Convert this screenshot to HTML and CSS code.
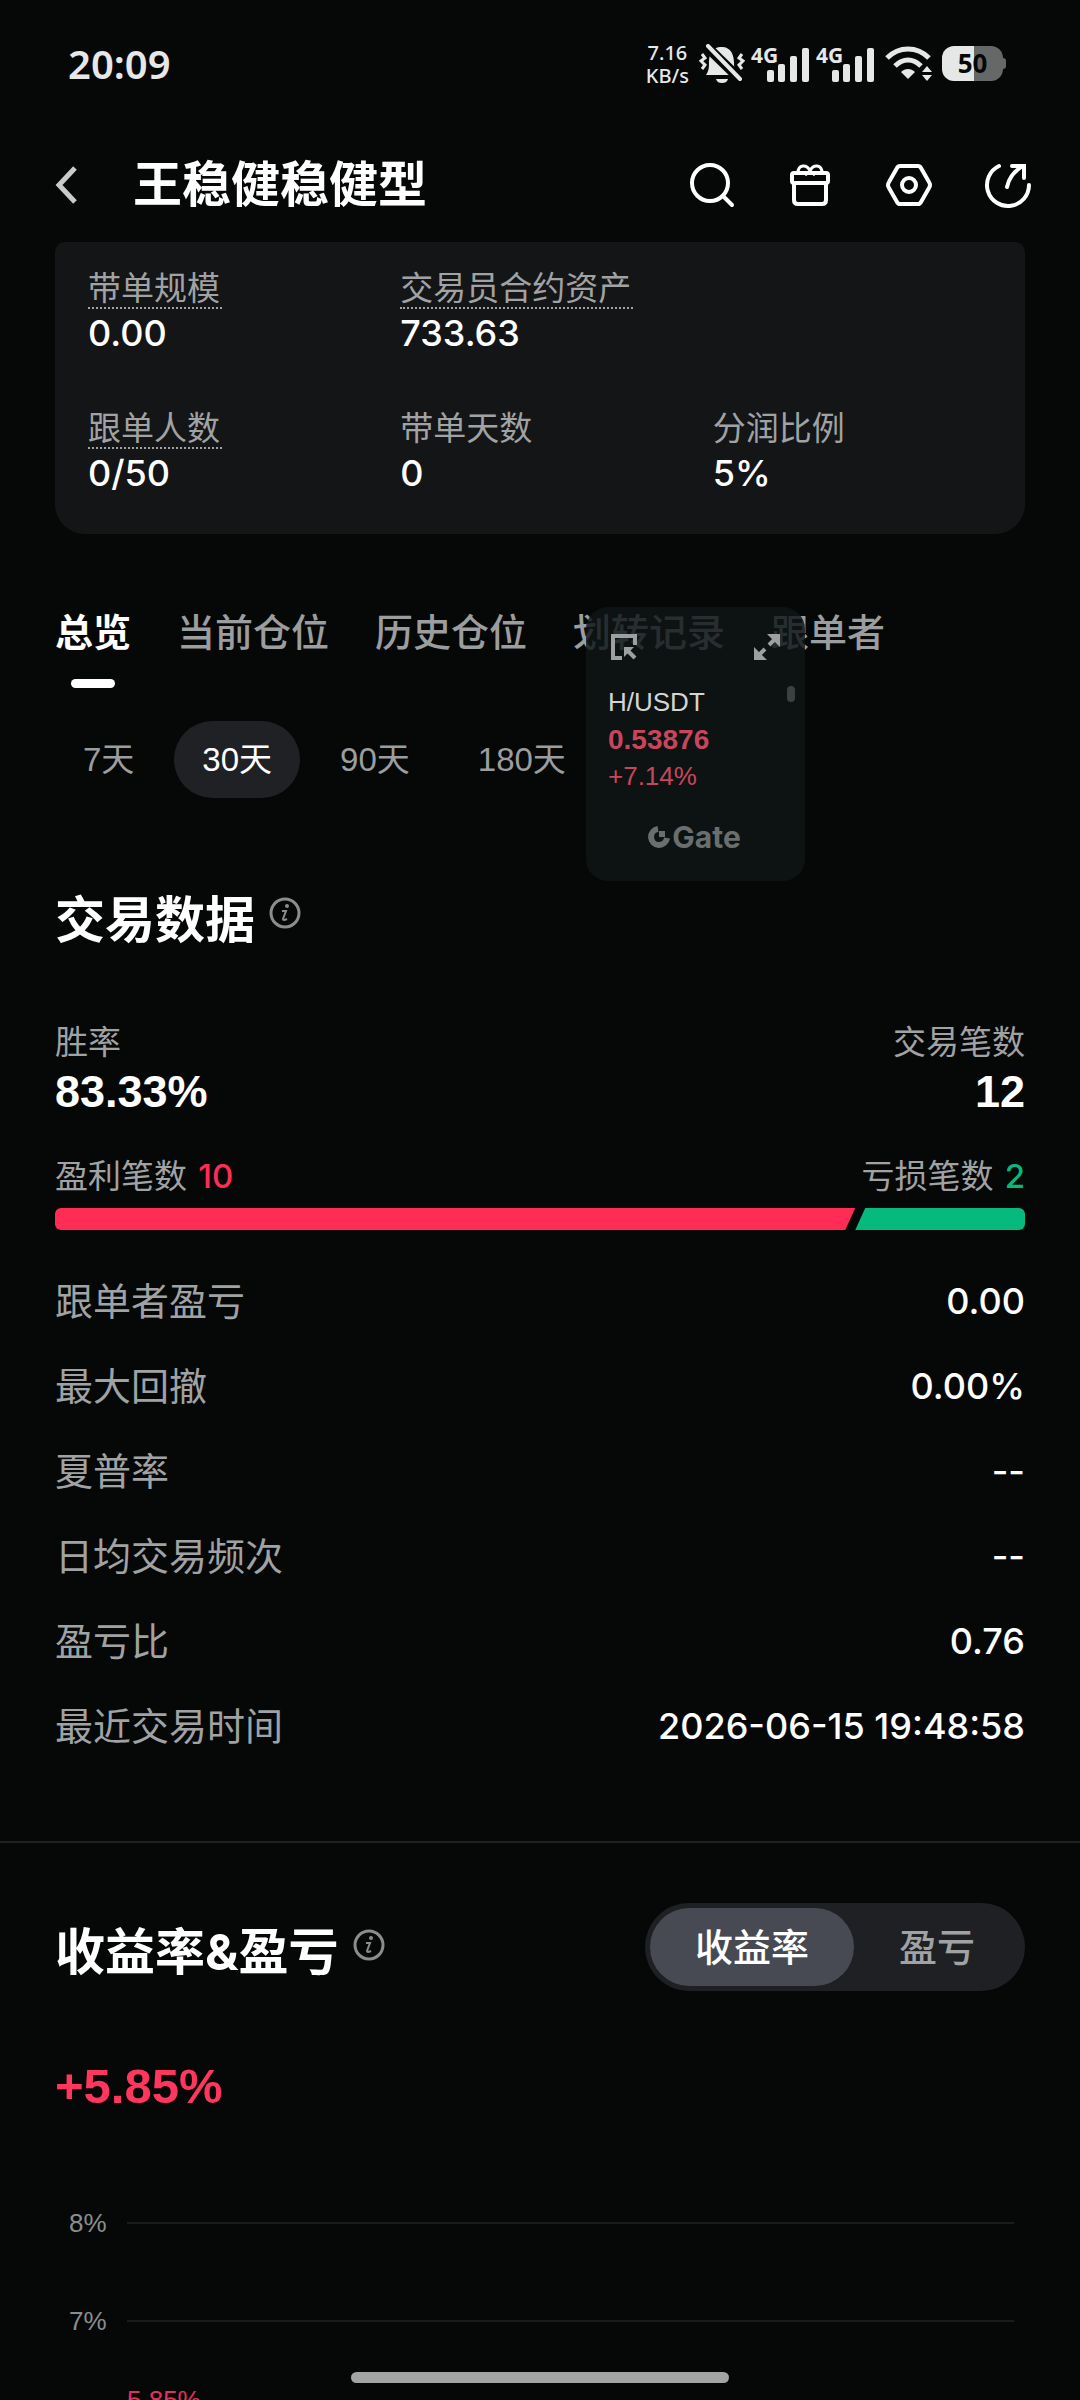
FILE: index.html
```html
<!DOCTYPE html>
<html lang="zh-CN">
<head>
    <meta charset="UTF-8">
    <meta name="viewport" content="width=device-width, initial-scale=1.0">
    <title>王稳健稳健型</title>
    <link rel="stylesheet" href="styles.css">
</head>
<body>

<div class="screen">
    <div class="status-bar">
        <span class="clock">20:09</span>
        <div class="status-icons">
            <div class="net-speed"><span>7.16</span><span>KB/s</span></div>
            <svg class="bell" width="46" height="40" viewBox="0 0 46 40" fill="#e6e7e7">
                <path d="M10 20c0-9 2-17 13-17 9 0 12 8 12 16 0 6 1 8 4 12H7c2-3 3-6 3-11z"/>
                <path d="M17 35h12c-1 3-3 4-6 4s-5-1-6-4z"/>
                <path d="M5 0l39 38" stroke="#060808" stroke-width="10"/>
                <path d="M9 2l32 33" stroke="#e6e7e7" stroke-width="4" stroke-linecap="round"/>
                <path d="M3 10l3 4-4 3 4 4-3 4M43 10l-3 4 4 3-4 4 3 4" fill="none" stroke="#e6e7e7" stroke-width="3"/>
            </svg>
            <div class="signal">
                <span>4G</span>
                <svg width="44" height="34" viewBox="0 0 44 34" fill="#e6e7e7">
                    <rect x="1" y="22" width="7" height="12" rx="2"/><rect x="12" y="16" width="7" height="18" rx="2"/>
                    <rect x="24" y="8" width="7" height="26" rx="2"/><rect x="36" y="0" width="7" height="34" rx="2"/>
                </svg>
            </div>
            <div class="signal">
                <span>4G</span>
                <svg width="44" height="34" viewBox="0 0 44 34" fill="#e6e7e7">
                    <rect x="1" y="22" width="7" height="12" rx="2"/><rect x="12" y="16" width="7" height="18" rx="2"/>
                    <rect x="24" y="8" width="7" height="26" rx="2"/><rect x="36" y="0" width="7" height="34" rx="2"/>
                </svg>
            </div>
            <svg class="wifi" width="48" height="36" viewBox="0 0 48 36" fill="none" stroke="#e6e7e7" stroke-width="5">
                <path d="M2 12c12-12 30-12 42 0"/>
                <path d="M10 20c8-8 18-8 26 0"/>
                <path d="M23 33l-7-7c4-4 10-4 14 0z" fill="#e6e7e7" stroke="none"/>
                <path d="M42 20l5 6H37zM42 35l5-6H37z" fill="#e6e7e7" stroke="none"/>
            </svg>
            <div class="battery"><span>50</span></div>
        </div>
    </div>

    <header class="header">
        <button class="icon-btn back" aria-label="返回">
            <svg width="22" height="38" viewBox="0 0 22 38" fill="none" stroke="#c9cbca" stroke-width="5">
                <path d="M20 2L4 19l16 17"/>
            </svg>
        </button>
        <h1>王稳健稳健型</h1>
        <nav class="actions">
            <button class="icon-btn" aria-label="搜索">
                <svg width="48" height="48" viewBox="0 0 48 48" fill="none" stroke="#fff" stroke-width="4" stroke-linecap="round">
                    <circle cx="23" cy="22" r="18"/><path d="M36 35l9 9"/>
                </svg>
            </button>
            <button class="icon-btn" aria-label="礼物">
                <svg width="48" height="48" viewBox="0 0 48 48" fill="none" stroke="#fff" stroke-width="4" stroke-linejoin="round">
                    <rect x="6" y="12" width="36" height="10" rx="2"/>
                    <path d="M8 22v17q0 4 4 4h24q4 0 4-4V22"/>
                    <path d="M12 12c0-9 9-9 12-2 3-7 12-7 12 2M19 14l5-4 5 4" stroke-width="3"/>
                </svg>
            </button>
            <button class="icon-btn" aria-label="设置">
                <svg width="48" height="48" viewBox="0 0 48 48" fill="none" stroke="#fff" stroke-width="4" stroke-linejoin="round">
                    <path d="M15 5h18q2 0 3 2l8 14q2 3 0 6l-8 14q-1 2-3 2H15q-2 0-3-2L4 27q-2-3 0-6l8-14q1-2 3-2z"/>
                    <circle cx="24" cy="24" r="7"/>
                </svg>
            </button>
            <button class="icon-btn" aria-label="分享">
                <svg width="48" height="48" viewBox="0 0 48 48" fill="none" stroke="#fff" stroke-width="4" stroke-linecap="round">
                    <path d="M15 5a21 21 0 1 0 30 19"/>
                    <path d="M23 26c2-9 6-14 14-20M28 5h12v12"/>
                </svg>
            </button>
        </nav>
    </header>

    <main>
        <dl class="summary">
            <div class="item">
                <dt class="hint">带单规模</dt>
                <dd>0.00</dd>
            </div>
            <div class="item wide">
                <dt class="hint">交易员合约资产</dt>
                <dd>733.63</dd>
            </div>
            <div class="item">
                <dt class="hint">跟单人数</dt>
                <dd>0/50</dd>
            </div>
            <div class="item">
                <dt>带单天数</dt>
                <dd>0</dd>
            </div>
            <div class="item">
                <dt>分润比例</dt>
                <dd>5%</dd>
            </div>
        </dl>

        <div class="tabs" role="tablist">
            <button class="tab active" role="tab" aria-selected="true">总览</button>
            <button class="tab" role="tab">当前仓位</button>
            <button class="tab" role="tab">历史仓位</button>
            <button class="tab" role="tab">划转记录</button>
            <button class="tab" role="tab">跟单者</button>
        </div>

        <div class="periods">
            <button class="period">7天</button>
            <button class="period active">30天</button>
            <button class="period">90天</button>
            <button class="period">180天</button>
        </div>

        <section class="trade-data">
            <div class="title">
                <h2>交易数据</h2>
                <svg class="info" width="32" height="32" viewBox="0 0 32 32" fill="none" stroke="#8b8d8d" stroke-width="3">
                    <circle cx="16" cy="16" r="14"/>
                    <path d="M13 14h4l-3 8q0 2 4 0" stroke-width="2"/><circle cx="18" cy="9" r="2" fill="#8b8d8d" stroke="none"/>
                </svg>
            </div>

            <div class="rate-row">
                <div class="rate">
                    <span class="label">胜率</span>
                    <strong>83.33%</strong>
                </div>
                <div class="rate right">
                    <span class="label">交易笔数</span>
                    <strong>12</strong>
                </div>
            </div>

            <div class="count-row">
                <span class="label">盈利笔数 <b class="red">10</b></span>
                <span class="label">亏损笔数 <b class="green">2</b></span>
            </div>
            <div class="ratio-bar">
                <div class="win" style="flex-grow: 82.5"></div>
                <div class="loss" style="flex-grow: 17.5"></div>
            </div>

            <dl class="details">
                <div class="row"><dt>跟单者盈亏</dt><dd>0.00</dd></div>
                <div class="row"><dt>最大回撤</dt><dd>0.00%</dd></div>
                <div class="row"><dt>夏普率</dt><dd>--</dd></div>
                <div class="row"><dt>日均交易频次</dt><dd>--</dd></div>
                <div class="row"><dt>盈亏比</dt><dd>0.76</dd></div>
                <div class="row"><dt>最近交易时间</dt><dd>2026-06-15 19:48:58</dd></div>
            </dl>
        </section>

        <section class="profit">
            <div class="profit-head">
                <div class="title">
                    <h2>收益率&amp;盈亏</h2>
                    <svg class="info" width="32" height="32" viewBox="0 0 32 32" fill="none" stroke="#8b8d8d" stroke-width="3">
                        <circle cx="16" cy="16" r="14"/>
                        <path d="M13 14h4l-3 8q0 2 4 0" stroke-width="2"/><circle cx="18" cy="9" r="2" fill="#8b8d8d" stroke="none"/>
                    </svg>
                </div>
                <div class="switch">
                    <button class="active">收益率</button>
                    <button>盈亏</button>
                </div>
            </div>
            <p class="profit-value">+5.85%</p>
            <div class="chart">
                <div class="grid-line"><span>8%</span></div>
                <div class="grid-line"><span>7%</span></div>
                <div class="point-label">5.85%</div>
            </div>
        </section>
    </main>

    <!-- floating price widget -->
    <aside class="ticker">
        <div class="ticker-tools">
            <svg width="26" height="26" viewBox="0 0 26 26" fill="none" stroke="#9da0a0" stroke-width="4">
                <path d="M11 24H2V2h22v9"/><path d="M24 24l-8-8" /><path d="M13 13h10l-10 10z" fill="#9da0a0" stroke="none"/>
            </svg>
            <svg width="26" height="26" viewBox="0 0 26 26" fill="#9da0a0">
                <path d="M13 0h13v13zM0 13v13h13z"/>
                <path d="M22 4l-7 7M11 15l-7 7" stroke="#9da0a0" stroke-width="4"/>
            </svg>
        </div>
        <div class="pair">H/USDT</div>
        <div class="price">0.53876</div>
        <div class="change">+7.14%</div>
        <div class="brand">
            <svg width="24" height="24" viewBox="0 0 24 24" fill="none">
                <path d="M11 4a8 8 0 1 0 9 9" stroke="#6a6e6e" stroke-width="6"/>
                <rect x="12" y="6" width="6" height="6" fill="#6a6e6e"/>
            </svg>
            <span>Gate</span>
        </div>
        <i class="thumb"></i>
    </aside>

    <div class="home-bar"></div>
</div>

</body>
</html>
```

FILE: styles.css
```css
* {
    box-sizing: border-box;
}

body {
    margin: 0;
    background-color: #060808;
    color: #ffffff;
    font-family: Inter, 'Noto Sans CJK SC', sans-serif;
}

h1, h2, p, dl, dd {
    margin: 0;
}

button {
    padding: 0;
    border: none;
    background: none;
    color: inherit;
    font-family: inherit;
    cursor: pointer;
}

svg {
    display: block;
}

.screen {
    position: relative;
    height: 100vh;
    overflow: hidden;
}

/* status bar */
.status-bar {
    display: flex;
    align-items: center;
    justify-content: space-between;
    height: 127px;
    padding: 0 74px 0 68px;
    color: #e6e7e7;
    font-family: 'Noto Sans', sans-serif;
}

.clock {
    font-size: 40px;
    font-weight: 600;
}

.status-icons {
    display: flex;
    align-items: center;
}

.net-speed {
    display: flex;
    flex-direction: column;
    align-items: center;
    margin-right: 10px;
    font-size: 20px;
    font-weight: 500;
    line-height: 23px;
}

.bell {
    margin-right: 6px;
}

.signal {
    display: flex;
    align-items: flex-start;
    width: 65px;
}

.signal span {
    font-size: 21px;
    font-weight: 700;
    line-height: 20px;
}

.signal svg {
    margin: 3px 0 0 -12px;
}

.wifi {
    margin-left: 4px;
}

.battery {
    position: relative;
    width: 61px;
    height: 35px;
    margin: 0 3px 0 9px;
    border-radius: 12px;
    background: linear-gradient(90deg, #e6e7e7 53%, #666868 53%);
    color: #060808;
    font-size: 26px;
    font-weight: 700;
    line-height: 35px;
    text-align: center;
}

.battery::after {
    content: "";
    position: absolute;
    top: 12px;
    right: -3px;
    width: 4px;
    height: 11px;
    border-radius: 0 3px 3px 0;
    background-color: #666868;
}

/* header */
.header {
    display: flex;
    align-items: center;
    height: 115px;
    padding: 0 48px 0 55px;
}

.header h1 {
    flex: 1;
    margin-left: 56px;
    font-size: 49px;
    font-weight: 700;
    line-height: 60px;
}

.actions {
    display: flex;
    gap: 51px;
}

main {
    padding: 0 55px;
}

/* summary card */
.summary {
    display: grid;
    grid-template-columns: repeat(3, 1fr);
    row-gap: 51px;
    padding: 27px 0 36px 33px;
    background-color: #141517;
    border-radius: 10px 10px 30px 30px;
}

.summary .wide {
    grid-column: span 2;
}

.summary dt {
    width: fit-content;
    padding-right: 2px;
    border-bottom: 2px dotted transparent;
    color: #a0a2a3;
    font-size: 33px;
    line-height: 38px;
}

.summary dt.hint {
    border-bottom-color: #a0a2a3;
}

.summary dd {
    font-size: 36px;
    font-weight: 500;
    line-height: 49px;
}

/* tabs */
.tabs {
    display: flex;
    align-items: flex-start;
    gap: 46px;
    margin-top: 71px;
}

.tab {
    color: #9b9d9e;
    font-size: 38px;
    font-weight: 500;
    line-height: 54px;
    white-space: nowrap;
}

.tab.active {
    color: #ffffff;
    font-weight: 700;
}

.tab.active::after {
    content: "";
    display: block;
    width: 44px;
    height: 9px;
    margin: 20px auto 0;
    border-radius: 5px;
    background-color: #ffffff;
}

.periods {
    display: flex;
    gap: 12px;
    margin-top: 33px;
}

.period {
    padding: 0 28px;
    border-radius: 39px;
    color: #9b9d9e;
    font-family: 'Liberation Sans', 'Noto Sans CJK SC', sans-serif;
    font-size: 33px;
    line-height: 77px;
}

.period.active {
    background-color: #202124;
    color: #ffffff;
}

/* trade data */
.title {
    display: flex;
    align-items: center;
}

.title h2 {
    padding-top: 6px;
    font-size: 50px;
    font-weight: 700;
    line-height: 60px;
}

.info {
    margin: 0 0 8px 14px;
}

.trade-data {
    margin-top: 86px;
}

.label {
    color: #a0a2a3;
    font-size: 33px;
    line-height: 40px;
}

.rate-row {
    display: flex;
    justify-content: space-between;
    margin-top: 72px;
}

.rate {
    display: flex;
    flex-direction: column;
}

.rate.right {
    align-items: flex-end;
}

.rate strong {
    font-family: 'Liberation Sans', sans-serif;
    font-size: 45px;
    font-weight: 700;
    line-height: 60px;
}

.count-row {
    display: flex;
    justify-content: space-between;
    margin-top: 34px;
}

.count-row b {
    margin-left: 2px;
    font-weight: 500;
}

.red {
    color: #ff2d55;
}

.green {
    color: #06b97c;
}

.ratio-bar {
    display: flex;
    height: 22px;
    margin-top: 12px;
    border-radius: 6px;
    overflow: hidden;
}

.win {
    background-color: #ff2d55;
    clip-path: polygon(0 0, 100% 0, calc(100% - 10px) 100%, 0 100%);
}

.loss {
    background-color: #06b97c;
    clip-path: polygon(10px 0, 100% 0, 100% 100%, 0 100%);
}

.details {
    margin-top: 29px;
}

.row {
    display: flex;
    align-items: center;
    justify-content: space-between;
    line-height: 85px;
}

.row dt {
    color: #a0a2a3;
    font-size: 38px;
}

.row dd {
    font-size: 36px;
    font-weight: 500;
}

/* profit */
.profit {
    margin: 72px -55px 0;
    padding: 60px 55px 0;
    border-top: 2px solid #1f2121;
}

.profit-head {
    display: flex;
    align-items: center;
    justify-content: space-between;
}

.profit-head .title {
    padding-top: 4px;
}

.switch {
    display: flex;
    padding: 5px;
    border-radius: 44px;
    background-color: #1f2023;
}

.switch button {
    padding: 0 45px;
    border-radius: 39px;
    color: #a0a2a3;
    font-size: 38px;
    font-weight: 500;
    line-height: 78px;
}

.switch button.active {
    background-color: #474a53;
    color: #ffffff;
}

.profit-value {
    margin-top: 65px;
    color: #ff365d;
    font-family: 'Liberation Sans', sans-serif;
    font-size: 49px;
    font-weight: 700;
    line-height: 60px;
}

.chart {
    margin-top: 87px;
    padding: 0 11px 0 14px;
    font-family: 'Liberation Sans', sans-serif;
    font-size: 26px;
    line-height: 40px;
}

.grid-line {
    display: flex;
    align-items: center;
    margin-bottom: 58px;
    color: #8b8d8d;
}

.grid-line span {
    width: 58px;
}

.grid-line::after {
    content: "";
    flex: 1;
    height: 2px;
    background-color: #1a1c1c;
}

.point-label {
    margin: -19px 0 0 58px;
    color: #e0335a;
}

/* floating ticker */
.ticker {
    position: absolute;
    top: 607px;
    right: 275px;
    width: 219px;
    padding: 27px 25px 21px 22px;
    border-radius: 22px;
    background-color: rgba(15, 21, 22, 0.82);
    font-family: 'Liberation Sans', sans-serif;
    font-size: 26px;
    line-height: 37px;
}

.ticker-tools {
    display: flex;
    justify-content: space-between;
    padding-left: 3px;
    margin-bottom: 24px;
}

.pair {
    color: #d3d5d5;
}

.price {
    color: #c8465c;
    font-size: 28px;
    font-weight: 700;
}

.change {
    color: #c8465c;
}

.brand {
    display: flex;
    align-items: center;
    justify-content: center;
    gap: 1px;
    margin: 25px 0 6px;
    color: #6a6e6e;
    font-family: Inter, sans-serif;
    font-size: 30px;
    font-weight: 700;
    line-height: 34px;
}

.thumb {
    position: absolute;
    top: 79px;
    right: 10px;
    width: 8px;
    height: 16px;
    border-radius: 4px;
    background-color: #3c4040;
}

.home-bar {
    position: absolute;
    bottom: 17px;
    left: 50%;
    width: 35%;
    height: 11px;
    border-radius: 6px;
    background-color: #a3a5a4;
    transform: translateX(-50%);
}
```
